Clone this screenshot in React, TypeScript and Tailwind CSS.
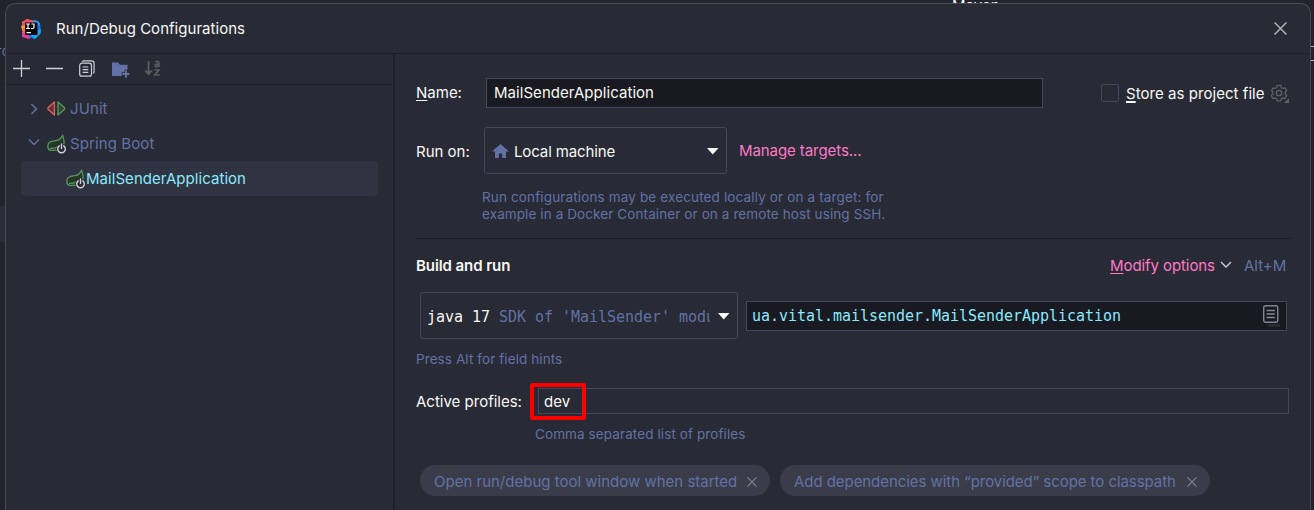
import React from "react";

function IdeLogo() {
  return (
    <svg width="21" height="20" viewBox="0 0 21 20" className="shrink-0">
      <path d="M1 3 6 0l7 2-4 9-7 1z" fill="#fc801d" />
      <path d="M2 4 6 0l5 2-3 8-6-3z" fill="#f4457c" />
      <path d="m0 7 5-1 2 7-5 1z" fill="#fc9a2c" />
      <path d="m1 12 5-1 6 6-4 3-7-2z" fill="#e83b97" />
      <path d="m2 9 3-1v5l-3 1z" fill="#fe6a4d" />
      <path d="m13 1 6 3 1 10-7 6-6-3z" fill="#087cfa" />
      <path d="m12 1 5 1 2 3-4 3z" fill="#2f9bff" />
      <path d="m15 12 5-2-1 5-5 5-4-3z" fill="#16a9f5" />
      <rect x="4" y="3.500" width="12.500" height="12.500" fill="#090408" />
      <path d="M5 5h4M7 5v4.500M5 9.500h4M10.500 5H13v3.300q0 1.200-1.200 1.200H10M5.500 13.700h4.500" stroke="#fff" strokeWidth="1.200" fill="none" />
    </svg>
  );
}

function SpringIcon() {
  return (
    <svg width="20" height="20" viewBox="0 0 20 20" className="shrink-0">
      <path
        d="M15.600 1.200c.2 1.600 1.500 4.400 1.500 7 0 5-4.300 8.200-9.300 8.200H3.200c-1.600-.8-2.400-2.400-2.400-4.200 0-3.700 2.800-5.100 6.700-5.300 4-.2 6.500-1.500 8.100-5.700z"
        fill="#253627"
        stroke="#57965c"
        strokeWidth="1.300"
        strokeLinejoin="round"
      />
      <path d="M3 14.300c3.400.5 6.500-.4 8.500-2.300" stroke="#57965c" strokeWidth="1.200" fill="none" />
      <circle cx="14.500" cy="15" r="5.200" fill="#282a36" />
      <path d="M12.300 11.900a3.800 3.800 0 1 0 4.400 0M14.500 10v4.600" stroke="#ced0d6" strokeWidth="1.400" fill="none" strokeLinecap="round" />
    </svg>
  );
}

function Caret() {
  return (
    <svg width="12" height="7" viewBox="0 0 12 7" className="mt-[2px] shrink-0">
      <path d="M0 0h11.500L5.750 6.500z" fill="#f8f8f2" />
    </svg>
  );
}

function Cross({ size, color }: { size: number; color: string }) {
  return (
    <svg width={size} height={size} viewBox="0 0 12 12" className="shrink-0">
      <path d="m.5.5 11 11M11.500.5l-11 11" stroke={color} strokeWidth="1.300" />
    </svg>
  );
}

function Toolbar() {
  return (
    <div className="flex h-[31px] shrink-0 items-center border-b border-[#1f2029] pb-px pl-[7px]">
      <svg width="17" height="17" viewBox="0 0 17 17">
        <path d="M8.500 0v17M0 8.500h17" stroke="#ced0d6" strokeWidth="1.300" />
      </svg>
      <svg width="17" height="17" viewBox="0 0 17 17" className="ml-4">
        <path d="M0 8.500h17" stroke="#ced0d6" strokeWidth="1.300" />
      </svg>
      <svg width="16" height="17" viewBox="0 0 16 17" className="ml-4" fill="none" stroke="#ced0d6" strokeWidth="1.200">
        <rect x=".7" y="3.200" width="11.800" height="13" rx="2.300" />
        <path d="M3.200 1.800Q3.700.8 5 .8h7.500q2.600 0 2.600 2.600v8.400q0 1.200-1 1.700M3.700 7h5.600M3.700 9.700h5.600M3.700 12.400h5.600" />
      </svg>
      <svg width="19" height="16" viewBox="0 0 19 16" className="mt-[2px] ml-[17px]">
        <path d="M0 .5h6l2 2.300h7.500v5h-3v2.500H9.800V14H0z" fill="#6272a4" />
        <path d="M14 8.500v7M10.500 12h7" stroke="#6272a4" strokeWidth="2" />
      </svg>
      <svg width="17" height="17" viewBox="0 0 17 17" className="ml-[13px]">
        <path d="M4.500 1v11" stroke="#5a5b5d" strokeWidth="1.800" />
        <path d="M0 10.500h9l-4.500 5z" fill="#5a5b5d" />
        <path d="M11.200 1.800q3.800-1.200 3.800 1.100v3.900M15 4.200q-4-.3-4 1.300 0 1.200 1.500 1.200Q14.500 6.700 15 5M10.500 10h4.500L10.700 15h5" stroke="#5a5b5d" strokeWidth="1.600" fill="none" />
      </svg>
    </div>
  );
}

function Sidebar() {
  return (
    <aside className="flex w-[389px] shrink-0 flex-col border-r-2 border-[#20222b]">
      <Toolbar />
      <div className="flex flex-col pt-[6px] text-[15px] text-[#6272a4]">
        <div className="flex h-[35px] items-center pl-[24px]">
          <svg width="8" height="12" viewBox="0 0 8 12">
            <path d="m1.500 1 5 5-5 5" stroke="#6272a4" strokeWidth="1.500" fill="none" />
          </svg>
          <svg width="19" height="15" viewBox="0 0 19 15" className="ml-[9px]">
            <path d="M7.400 1v13L1 8.200V6.800z" fill="#5e3339" stroke="#db5c5c" strokeWidth="1.400" strokeLinejoin="round" />
            <path d="M11 1v13l6.500-5.800V6.800z" fill="#2c4532" stroke="#57965c" strokeWidth="1.400" strokeLinejoin="round" />
          </svg>
          <span className="ml-1 pt-[2px] tracking-[0.1px]">JUnit</span>
        </div>
        <div className="flex h-[35px] items-center pl-[22px]">
          <svg width="12" height="8" viewBox="0 0 12 8" className="mb-[3px]">
            <path d="m1 1.500 5 5 5-5" stroke="#6272a4" strokeWidth="1.500" fill="none" />
          </svg>
          <span className="ml-[7px] flex"><SpringIcon /></span>
          <span className="ml-[3px] pt-[2px] tracking-[0.1px]">Spring Boot</span>
        </div>
        <div className="ml-[15px] flex h-[35px] w-[357px] items-center rounded-[4px] bg-[#303341] pl-[45px] text-[#8be9fd]">
          <SpringIcon />
          <span className="pt-[2px] tracking-[0.05px]">MailSenderApplication</span>
        </div>
      </div>
    </aside>
  );
}

function Chip({ width, children }: { width: string; children: React.ReactNode }) {
  return (
    <div className={"flex h-[31px] shrink-0 items-center justify-between rounded-full bg-[#3a3c4a] pt-[2px] pr-[13px] pl-[14px] text-[15px] text-[#6272a4] " + width}>
      <span className="pt-px">{children}</span>
      <Cross size={10} color="#818594" />
    </div>
  );
}

function ConfigForm() {
  return (
    <main className="flex min-w-0 flex-1 flex-col pt-[24px] pl-[21px] text-[15px] text-[#f8f8f2]">
      <div className="flex h-[30px] items-center">
        <span className="w-[70px]"><span className="underline underline-offset-2">N</span>ame:</span>
        <div className="flex h-[30px] w-[557px] items-center border border-[#44475a] bg-[#191a21] pl-[7px] tracking-[0.05px]">MailSenderApplication</div>
        <div className="ml-[58px] h-[18px] w-[18px] rounded-[2px] border border-[#44475a]" />
        <span className="ml-[7px] w-[145px] pt-[2px] tracking-[0.05px]"><span className="underline decoration-2 underline-offset-2">S</span>tore as project file</span>
        <svg width="19" height="20" viewBox="0 0 19 20" fill="none" stroke="#5f6064" strokeWidth="1.300" strokeLinejoin="round" className="mt-px">
          <path d="M6.300 1.400h3.400l.8 2.300 1.100.6 2.400-.5 1.700 2.900-1.600 1.800v1.300l1.600 1.800-1.700 2.900-2.400-.5-1.100.6-.8 2.300H6.300l-.8-2.300-1.100-.6-2.400.5-1.700-2.900 1.600-1.800V8.500L.6 6.700 2 3.800l2.400.5 1.100-.6z" />
          <circle cx="8" cy="9.100" r="2.700" />
          <path d="M18 14v5h-5z" fill="#5f6064" stroke="none" />
        </svg>
      </div>
      <div className="mt-[19px] flex h-[47px] items-center">
        <span className="w-[68px] pt-[3px]">Run on:</span>
        <div className="flex h-[47px] w-[243px] items-center rounded-[3px] border border-[#44475a] pr-[7px] pl-[7px]">
          <svg width="17" height="15" viewBox="0 0 17 15" className="mt-px">
            <path d="M8.500 0 17 7.500h-3V14h-3.800V9.500H6.800V14H3V7.500H0z" fill="#6272a4" />
          </svg>
          <span className="ml-[5px] flex-1 pt-[3px] tracking-[-0.12px]">Local machine</span>
          <Caret />
        </div>
        <span className="ml-3 pt-px tracking-[-0.08px] text-[#ff79c6]">Manage targets...</span>
      </div>
      <div className="mt-[15px] ml-[66px] h-[34px] text-[13.5px] leading-[17px] tracking-[0.14px] whitespace-nowrap text-[#6272a4]">
        Run configurations may be executed locally or on a target: for
        <br />
        <span className="tracking-[0.1px]">example in a Docker Container or on a remote host using SSH.</span>
      </div>
      <div className="mt-[15px] h-px w-[876px] bg-[#1f2029]" />
      <div className="mt-[16px] flex h-[22px] items-center">
        <span className="w-[694px] font-semibold tracking-[-0.08px]">Build and run</span>
        <span className="w-[105px] tracking-[-0.08px] text-[#ff79c6]"><span className="underline underline-offset-2">M</span>odify options</span>
        <svg width="12" height="8" viewBox="0 0 12 8" className="mb-[3px] ml-[5px]">
          <path d="m1 1 5 5 5-5" stroke="#ced0d6" strokeWidth="1.300" fill="none" />
        </svg>
        <span className="ml-3 text-[#6272a4]">Alt+M</span>
      </div>
      <div className="mt-[15px] flex h-[47px] items-center pl-[4px] font-['DejaVu_Sans_Mono',monospace] text-[15px] tracking-[-0.03px]">
        <div className="flex h-[47px] w-[318px] items-center rounded-[3px] border border-[#44475a] pr-[7px] pl-[6px]">
          <span className="w-[283px] shrink-0 overflow-hidden pt-[3px] whitespace-nowrap">
            java 17 <span className="text-[#6272a4]">SDK of 'MailSender' module</span>
          </span>
          <span className="ml-[8px]"><Caret /></span>
        </div>
        <div className="ml-[8px] flex h-[30px] w-[541px] items-center justify-between border border-[#44475a] bg-[#191a21] pr-[7px] pl-[5px] text-[#8be9fd]">
          <span className="pt-[2px]">ua.vital.mailsender.MailSenderApplication</span>
          <svg width="17" height="22" viewBox="0 0 17 22" fill="none" stroke="#818594" strokeWidth="1.400" className="-mr-px mt-px">
            <rect x=".7" y=".7" width="14" height="16.600" rx="2" />
            <path d="M3.500 5.500h8.400M3.500 9h8.400M3.500 12.500h8.400" />
            <path d="M5 20.500h12" stroke="#2a2c36" strokeWidth="3" />
          </svg>
        </div>
      </div>
      <div className="mt-[11px] h-[18px] text-[13.5px] leading-[18px] tracking-[0.09px] text-[#6272a4]">Press Alt for field hints</div>
      <div className="mt-[15px] flex h-[37px] items-center">
        <span className="w-[122px] pt-[2px]">Active profiles:</span>
        <div className="relative mb-px flex h-[26px] w-[751px] items-center border border-[#44475a] pl-[5px]">
          <span className="pt-[2px]">dev</span>
          <div className="absolute -top-[6px] -left-[9px] h-[37px] w-[56px] rounded-[2px] border-4 border-[#ff0000]" />
        </div>
      </div>
      <div className="mt-[5px] ml-[119px] h-[18px] text-[13.5px] leading-[18px] tracking-[0.1px] text-[#6272a4]">Comma separated list of profiles</div>
      <div className="mt-[22px] flex gap-[10px] pl-[4px]">
        <Chip width="w-[350px]">Open run/debug tool window when started</Chip>
        <Chip width="w-[430px] tracking-[-0.06px]">Add dependencies with “provided” scope to classpath</Chip>
      </div>
    </main>
  );
}

export default function App() {
  return (
    <div className="flex h-[510px] w-[1314px] overflow-hidden bg-[#22232d] font-[Inter,sans-serif] whitespace-nowrap">
      <div className="relative flex w-[5px] shrink-0 flex-col overflow-hidden pt-[206px]">
        <div className="h-[36px] bg-[#2a2d3a]" />
        <span className="absolute top-[42px] -left-[3px] text-[13px] text-[#6272a4]">ro</span>
      </div>
      <div className="flex w-[1306px] shrink-0 flex-col">
        <div className="flex h-[3px] shrink-0 overflow-hidden pl-[947px] text-[15px] leading-[18px] text-[#f8f8f2]">
          <span className="-mt-[3px]">Maven</span>
        </div>
        <div className="flex h-[507px] shrink-0 flex-col overflow-hidden rounded-t-[10px] border border-b-0 border-[#484a53] bg-[#282a36]">
          <header className="flex h-[50px] shrink-0 items-center border-b border-[#1f2029] pr-[23px] pl-[15px] text-[15px] text-[#f8f8f2]">
            <IdeLogo />
            <span className="ml-[14px] flex-1 pt-[2px] tracking-[0.03px]">Run/Debug Configurations</span>
            <Cross size={13} color="#b4b5ba" />
          </header>
          <div className="flex min-h-0 flex-1">
            <Sidebar />
            <ConfigForm />
          </div>
        </div>
      </div>
      <div className="flex w-[3px] shrink-0 flex-col pt-[46px]">
        <div className="h-[15px] border-y border-[#b4b5ba]" />
      </div>
    </div>
  );
}
